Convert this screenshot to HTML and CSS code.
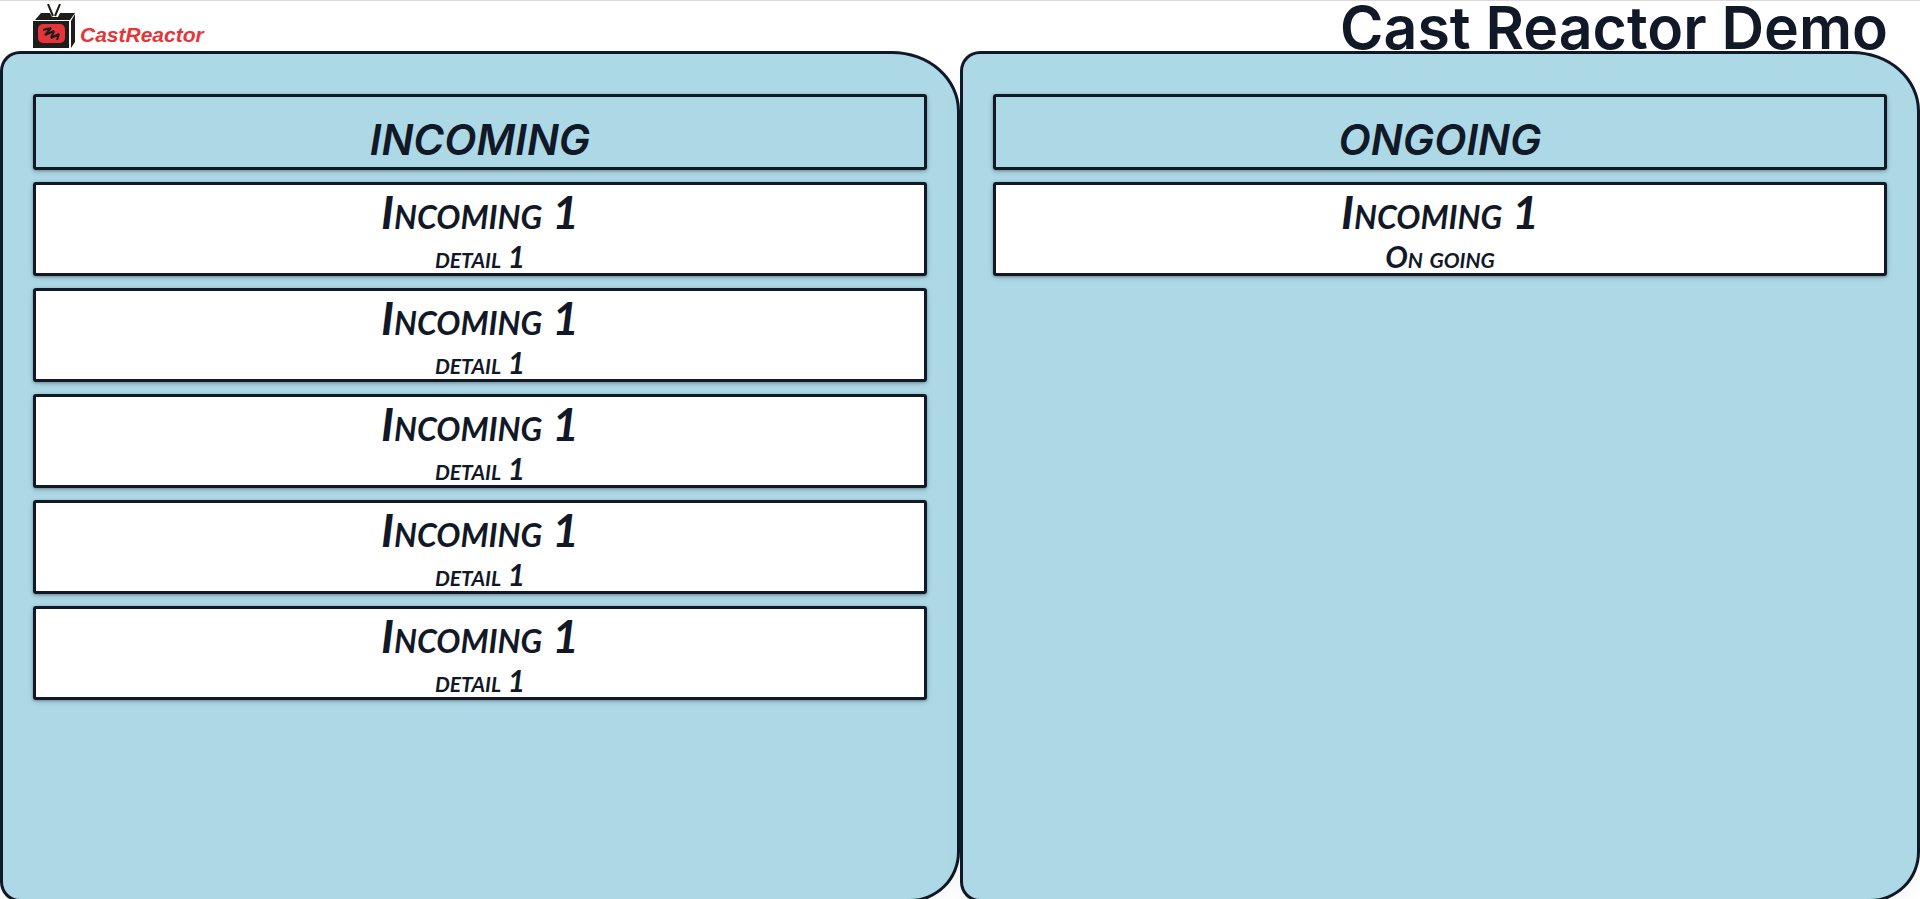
FILE: index.html
```
<!DOCTYPE html>
<html lang="en">
<head>
<meta charset="utf-8">
<title>Cast Reactor Demo</title>
<link rel="stylesheet" href="styles.css">
</head>
<body>
<header class="topbar">
  <a class="brand" href="#">
    <svg class="brand-icon" viewBox="0 0 43 45" aria-hidden="true">
      <path d="M2 16L8 9H42L37 16z" fill="#1d1d1b"/>
      <path d="M16 7h12l-3 6h-6z" fill="#fff"/>
      <path d="M15 0l5 12M27 0l-5 12" fill="none" stroke="#1d1d1b" stroke-width="2"/>
      <path d="M38 17l4-7v28l-4 6z" fill="#1d1d1b"/>
      <path d="M0 17h36v27H0z" fill="#1d1d1b"/>
      <rect x="5" y="20" width="27" height="19" rx="5" fill="#e73439"/>
      <path d="M10 26l8-2-6 7 9-4-3 7 8-4-2 6" fill="none" stroke="#1d1d1b" stroke-width="2" stroke-linejoin="bevel"/>
    </svg>
    <span class="brand-name">CastReactor</span>
  </a>
  <h1 class="title">Cast Reactor Demo</h1>
</header>
<main class="board">
  <section class="panel">
    <h2 class="card heading">INCOMING</h2>
    <article class="card item"><h3 class="name">Incoming 1</h3><p class="detail">detail 1</p></article>
    <article class="card item"><h3 class="name">Incoming 1</h3><p class="detail">detail 1</p></article>
    <article class="card item"><h3 class="name">Incoming 1</h3><p class="detail">detail 1</p></article>
    <article class="card item"><h3 class="name">Incoming 1</h3><p class="detail">detail 1</p></article>
    <article class="card item"><h3 class="name">Incoming 1</h3><p class="detail">detail 1</p></article>
  </section>
  <section class="panel">
    <h2 class="card heading">ONGOING</h2>
    <article class="card item"><h3 class="name">Incoming 1</h3><p class="detail">On going</p></article>
  </section>
</main>
</body>
</html>
```
FILE: styles.css
```
* { box-sizing: border-box; margin: 0; }
html { overflow: hidden; }
body {
  height: 100vh;
  background: #fff;
  color: #111827;
  font-family: Lato, "Liberation Sans", sans-serif;
}
.topbar {
  display: flex;
  justify-content: space-between;
  align-items: flex-end;
  height: 51px;
  padding: 0 32px;
  border-top: 1px solid #d9d9d9;
}
.brand {
  display: flex;
  align-items: flex-end;
  gap: 4px;
  height: 47px;
  padding: 0 0 2px 1px;
  color: #e73439;
  text-decoration: none;
}
.brand-icon { width: 43px; height: 45px; }
.brand-name {
  font-family: "Liberation Sans", sans-serif;
  font-size: 21px;
  font-style: italic;
  font-weight: 700;
  line-height: 28px;
}
.title {
  font-family: Inter, sans-serif;
  font-size: 59px;
  font-weight: 600;
  line-height: 46px;
}
.board {
  display: grid;
  grid-template-columns: 1fr 1fr;
  height: calc(100vh - 48px);
}
.panel {
  display: flex;
  flex-direction: column;
  gap: 12px;
  padding: 40px 30px;
  background: #add8e6;
  border: 3px solid #111827;
  border-radius: 20px 68px 50px 20px / 20px 60px 50px 20px;
  box-shadow: 0 10px 25px -5px rgba(0, 0, 0, .06);
}
.card {
  border: 3px solid #111827;
  border-radius: 3px;
  box-shadow: 0 1px 3px rgba(0, 0, 0, .3), 0 2px 6px rgba(0, 0, 0, .12);
  text-align: center;
  font-style: italic;
  font-variant: small-caps;
}
.heading {
  padding-top: 16px;
  font-family: Inter, sans-serif;
  font-size: 42px;
  font-weight: 600;
  line-height: 54px;
}
.item { background: #fff; }
.name { font-size: 46px; font-weight: 700; line-height: 54px; }
.detail { font-size: 30px; font-weight: 700; line-height: 34px; }
```
